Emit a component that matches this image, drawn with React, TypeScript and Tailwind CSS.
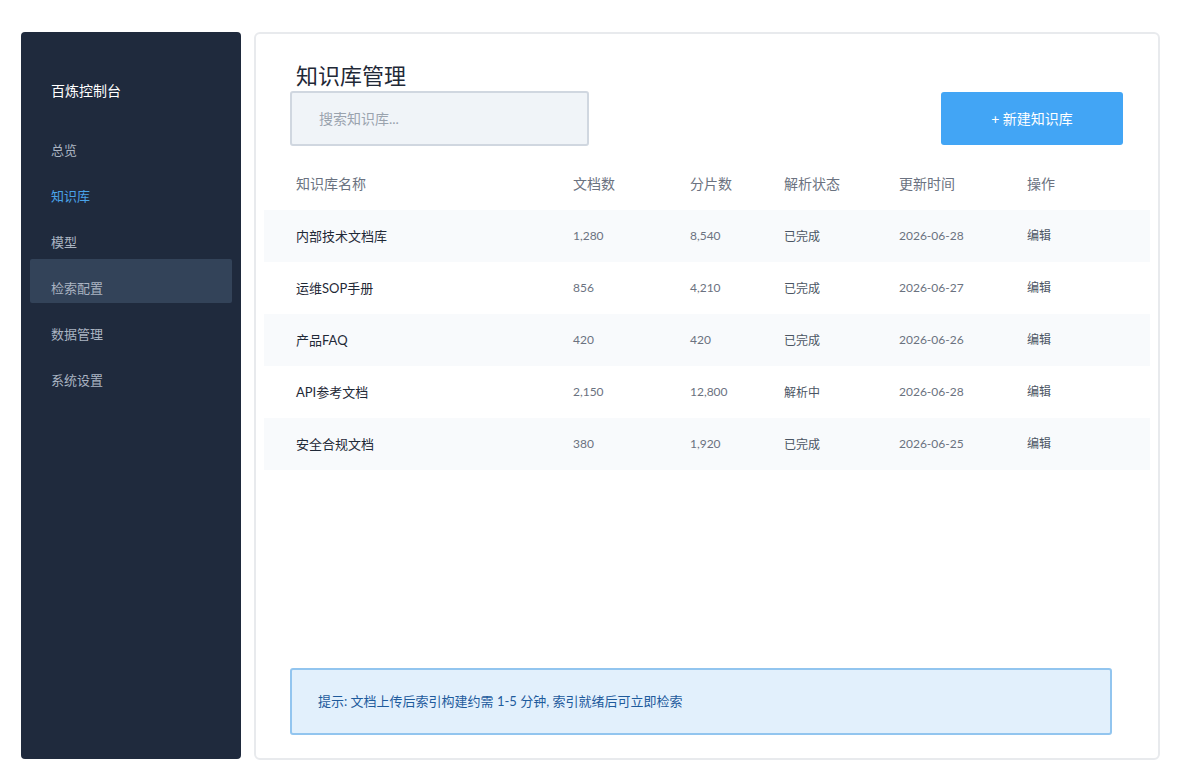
import React from 'react';

const font = { fontFamily: 'Lato, "Noto Sans CJK SC", sans-serif' };

const navItems = ['总览', '知识库', '模型', '检索配置', '数据管理', '系统设置'];

const rows = [
  { name: '内部技术文档库', docs: '1,280', chunks: '8,540', status: '已完成', date: '2026-06-28' },
  { name: '运维SOP手册', docs: '856', chunks: '4,210', status: '已完成', date: '2026-06-27' },
  { name: '产品FAQ', docs: '420', chunks: '420', status: '已完成', date: '2026-06-26' },
  { name: 'API参考文档', docs: '2,150', chunks: '12,800', status: '解析中', date: '2026-06-28' },
  { name: '安全合规文档', docs: '380', chunks: '1,920', status: '已完成', date: '2026-06-25' },
];

const cols = 'grid grid-cols-[277px_117px_94px_115px_128px_1fr] items-center';

export default function App() {
  return (
    <div className="w-[1192px] h-[780px] bg-white flex gap-[13px] pl-[21px] pt-[32px] pb-[21px] pr-[32px]" style={font}>
      {/* Sidebar */}
      <aside className="w-[220px] h-[727px] bg-[#1f2a3d] rounded-[4px] px-[9px] flex flex-col">
        <div className="text-white text-[14px] pl-[21px] pt-[48px] pb-[20px]">百炼控制台</div>
        <nav className="flex flex-col gap-[2px]">
          {navItems.map((item) => (
            <div
              key={item}
              className={
                'h-[44px] pt-[20px] leading-[18px] pl-[21px] text-[13px] rounded-[2px] ' +
                (item === '知识库'
                  ? 'text-[#4aa3e8]'
                  : item === '检索配置'
                  ? 'bg-[#334359] text-[#aab4c2]'
                  : 'text-[#aab4c2]')
              }
            >
              {item}
            </div>
          ))}
        </nav>
      </aside>

      {/* Main panel */}
      <main className="flex-1 h-[728px] border-2 border-[#e8eaed] rounded-[6px] flex flex-col px-[8px]">
        <h1 className="text-[22px] text-[#1f2937] pl-[32px] pt-[28px] leading-[28px]">知识库管理</h1>
        <div className="flex items-center justify-between pl-[26px] pr-[27px] mt-[1px]">
          <div className="w-[299px] h-[55px] bg-[#f0f4f8] border-2 border-[#d0d7e0] rounded-[3px] flex items-center pl-[27px] text-[14px] text-[#9aa3ae]">
            搜索知识库...
          </div>
          <button className="w-[182px] h-[53px] bg-[#42a5f5] rounded-[3px] text-white text-[14px]">
            + 新建知识库
          </button>
        </div>

        {/* Table */}
        <div className={cols + ' h-[64px] pt-[10px] pl-[32px] text-[14px] text-[#6b7280]'}>
          <span>知识库名称</span>
          <span>文档数</span>
          <span>分片数</span>
          <span>解析状态</span>
          <span>更新时间</span>
          <span>操作</span>
        </div>
        <div className="flex flex-col">
          {rows.map((r, i) => (
            <div
              key={r.name}
              className={cols + ' h-[52px] pt-[2px] pl-[32px] text-[12px] ' + (i % 2 === 0 ? 'bg-[#f8fafc]' : 'bg-white')}
            >
              <span className="text-[13px] text-[#1f2937]">{r.name}</span>
              <span className="text-[#6b7280] -mt-[2px]">{r.docs}</span>
              <span className="text-[#6b7280] -mt-[2px]">{r.chunks}</span>
              <span className="text-[#4b5563]">{r.status}</span>
              <span className="text-[#6b7280] -mt-[2px]">{r.date}</span>
              <span className="text-[#4b5563] -mt-[2px]">编辑</span>
            </div>
          ))}
        </div>

        <div className="flex-1" />
        <div className="ml-[26px] mr-[38px] mb-[23px] h-[67px] bg-[#e2f0fc] border-2 border-[#92c5ef] rounded-[3px] flex items-center pl-[26px] text-[13px] text-[#1e5b9c]">
          提示: 文档上传后索引构建约需 1-5 分钟, 索引就绪后可立即检索
        </div>
      </main>
    </div>
  );
}
